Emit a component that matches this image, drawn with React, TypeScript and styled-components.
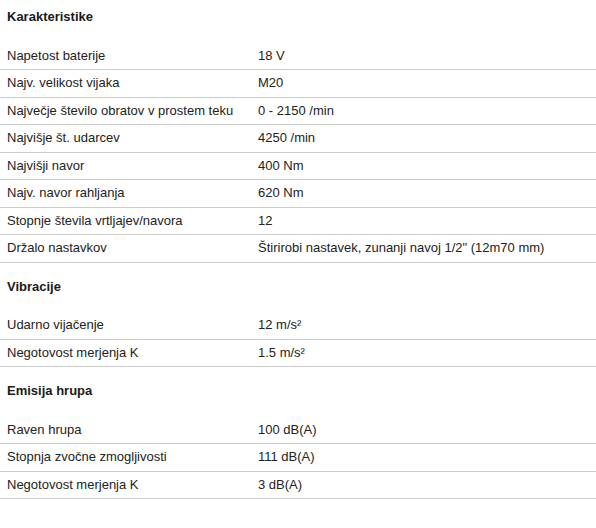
import React from 'react';
import styled, { createGlobalStyle } from 'styled-components';

interface Spec {
  label: string;
  value: string;
}

interface Section {
  title: string;
  rows: Spec[];
}

const sections: Section[] = [
  {
    title: 'Karakteristike',
    rows: [
      { label: 'Napetost baterije', value: '18 V' },
      { label: 'Najv. velikost vijaka', value: 'M20' },
      { label: 'Največje število obratov v prostem teku', value: '0 - 2150 /min' },
      { label: 'Najvišje št. udarcev', value: '4250 /min' },
      { label: 'Najvišji navor', value: '400 Nm' },
      { label: 'Najv. navor rahljanja', value: '620 Nm' },
      { label: 'Stopnje števila vrtljajev/navora', value: '12' },
      { label: 'Držalo nastavkov', value: 'Štirirobi nastavek, zunanji navoj 1/2" (12m70 mm)' }
    ]
  },
  {
    title: 'Vibracije',
    rows: [
      { label: 'Udarno vijačenje', value: '12 m/s²' },
      { label: 'Negotovost merjenja K', value: '1.5 m/s²' }
    ]
  },
  {
    title: 'Emisija hrupa',
    rows: [
      { label: 'Raven hrupa', value: '100 dB(A)' },
      { label: 'Stopnja zvočne zmogljivosti', value: '111 dB(A)' },
      { label: 'Negotovost merjenja K', value: '3 dB(A)' }
    ]
  }
];

const GlobalStyle = createGlobalStyle`
  html, body {
    margin: 0;
    padding: 0;
    background: #ffffff;
  }

  body {
    font-family: Arial, "Liberation Sans", sans-serif;
    font-size: 13px;
    color: #222222;
  }
`;

const Page = styled.div`
  width: 596px;
  display: flex;
  flex-direction: column;
`;

const Block = styled.section<{ $first: boolean }>`
  display: flex;
  flex-direction: column;
  margin-top: ${({ $first }) => ($first ? 0 : 7)}px;
`;

const Title = styled.h3`
  margin: 0 0 8.5px;
  padding: 8px 7px;
  font-size: 13px;
  line-height: 18px;
  font-weight: 700;
  color: #1a1a1a;
`;

const Row = styled.div`
  display: grid;
  grid-template-columns: 251px 1fr;
  box-sizing: border-box;
  height: 27.5px;
  align-items: center;
  border-bottom: 1px solid #cccccc;
`;

const Cell = styled.div`
  padding: 0 7px;
  line-height: 16px;
  white-space: nowrap;
`;

export default function App () {
  return (
    <Page>
      <GlobalStyle />
      {sections.map((section, i) => (
        <Block $first={i === 0} key={section.title}>
          <Title>{section.title}</Title>
          {section.rows.map((row) => (
            <Row key={row.label}>
              <Cell>{row.label}</Cell>
              <Cell>{row.value}</Cell>
            </Row>
          ))}
        </Block>
      ))}
    </Page>
  );
}
